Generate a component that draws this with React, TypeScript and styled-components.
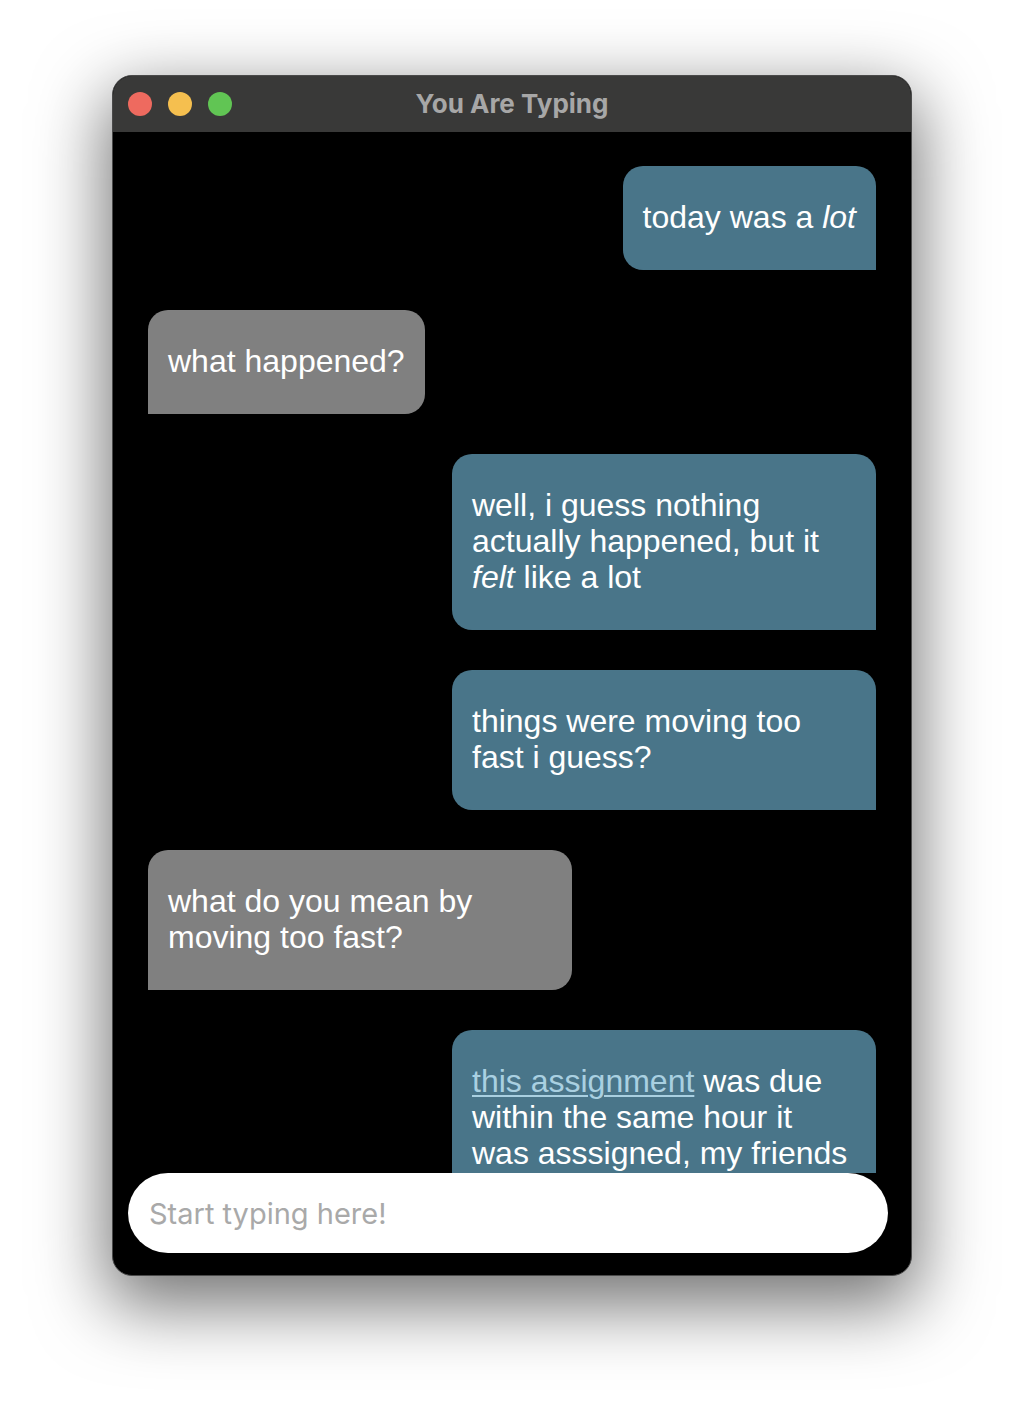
import React from 'react';
import styled, { createGlobalStyle } from 'styled-components';

const GlobalStyle = createGlobalStyle`
	html, body {
		margin: 0;
		padding: 0;
		background: #ffffff;
	}
`;

const Page = styled.div`
	padding: 75px 0 0 112px;
	height: 1424px;
	box-sizing: border-box;
`;

const Window = styled.div`
	width: 800px;
	height: 1201px;
	box-sizing: border-box;
	display: flex;
	flex-direction: column;
	background: #000;
	border: 1px solid #4a4a4a;
	border-radius: 20px;
	overflow: hidden;
	box-shadow: 0 24px 70px 6px rgba(0, 0, 0, 0.55);
`;

const TitleBar = styled.header`
	position: relative;
	height: 56px;
	flex-shrink: 0;
	display: flex;
	align-items: center;
	justify-content: center;
	background: #393938;
`;

const Lights = styled.div`
	position: absolute;
	left: 15px;
	top: 16px;
	display: flex;
	gap: 16px;
`;

const Light = styled.span<{ $color: string }>`
	width: 24px;
	height: 24px;
	border-radius: 50%;
	background: ${(p) => p.$color};
`;

const Title = styled.h1`
	margin: 0 0 2px;
	font-family: Inter, 'Open Sans', sans-serif;
	font-weight: 700;
	font-size: 26px;
	color: #a7a7a7;
`;

const Messages = styled.main`
	flex: 1;
	min-height: 0;
	overflow: hidden;
	display: flex;
	flex-direction: column;
	gap: 40px;
	padding: 34px 35px 0;
`;

const Bubble = styled.div<{ $mine?: boolean }>`
	flex-shrink: 0;
	max-width: 424px;
	box-sizing: border-box;
	padding: 33px 20px 35px;
	align-self: ${(p) => (p.$mine ? 'flex-end' : 'flex-start')};
	background: ${(p) => (p.$mine ? '#497589' : '#808080')};
	border-radius: ${(p) => (p.$mine ? '20px 20px 0 20px' : '20px 20px 20px 0')};
	color: #fff;
	font-family: 'Liberation Sans', Arial, sans-serif;
	font-size: 32px;
	line-height: 36px;
`;

const Link = styled.a`
	color: #a9d0e1;
	text-decoration: underline;
	text-underline-offset: 3px;
	text-decoration-thickness: 2px;
`;

const Composer = styled.footer`
	flex-shrink: 0;
	padding: 0 23px 22px 15px;
`;

const Input = styled.input`
	width: 100%;
	height: 80px;
	box-sizing: border-box;
	border: none;
	outline: none;
	border-radius: 40px;
	padding: 0 21px;
	background: #fff;
	font-family: Inter, 'Open Sans', sans-serif;
	font-size: 29px;
	color: #222;

	&::placeholder {
		color: #a9a9a9;
	}
`;

export default function App() {
	return (
		<>
			<GlobalStyle />
			<Page>
				<Window>
					<TitleBar>
						<Lights>
							<Light $color="#ee6a5f" />
							<Light $color="#f5bf4f" />
							<Light $color="#61c554" />
						</Lights>
						<Title>You Are Typing</Title>
					</TitleBar>

					<Messages>
						<Bubble $mine>
							today was a <i>lot</i>
						</Bubble>
						<Bubble>what happened?</Bubble>
						<Bubble $mine>
							well, i guess nothing actually happened, but it <i>felt</i> like a lot
						</Bubble>
						<Bubble $mine>things were moving too fast i guess?</Bubble>
						<Bubble>what do you mean by moving too fast?</Bubble>
						<Bubble $mine>
							<Link href="#">this assignment</Link> was due within the same hour it
							was asssigned, my friends and i were up all night
						</Bubble>
					</Messages>

					<Composer>
						<Input placeholder="Start typing here!" />
					</Composer>
				</Window>
			</Page>
		</>
	);
}
